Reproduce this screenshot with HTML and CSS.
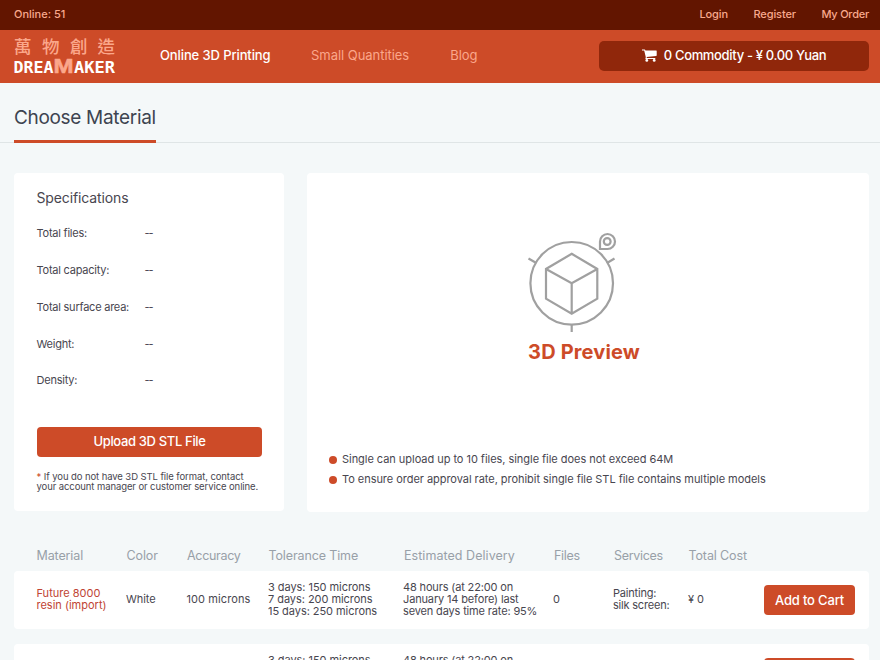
FILE: index.html
```html
<!DOCTYPE html>
<html lang="en">
<head>
<meta charset="utf-8">
<title>Dreamaker - Choose Material</title>
<link rel="stylesheet" href="styles.css">
</head>
<body>
<div class="topbar">
  <span class="online">Online: 51</span>
  <nav class="account"><a>Login</a><a>Register</a><a class="order">My Order</a></nav>
</div>
<header class="header">
  <svg class="logo" width="104" height="40" viewBox="0 0 104 40">
    <text class="logo-cjk" y="16" x="0 28 56 83.5">萬物創造</text>
    <text class="logo-word" x="-0.5" y="36" textLength="40" lengthAdjust="spacingAndGlyphs">DREA</text>
    <text class="logo-m" x="39.5" y="36" textLength="20" lengthAdjust="spacingAndGlyphs">M</text>
    <text class="logo-word" x="60" y="36" textLength="41" lengthAdjust="spacingAndGlyphs">AKER</text>
  </svg>
  <nav class="nav"><a class="active">Online 3D Printing</a><a class="quantities">Small Quantities</a><a>Blog</a></nav>
  <a class="cart">
    <svg width="15" height="13" viewBox="0 0 15 13" fill="#fff"><path d="M0 0.4H2.6Q3.2 0.4 3.4 1.4H14.2Q14.8 1.4 14.7 2V6.3Q14.7 6.9 14.1 7L4.6 8.1L4.9 8.9H13.3V10.1H4Q3.4 10.1 3.4 9.5L3.8 8.3L2.2 1.6H0Z"/><circle cx="4.8" cy="11.4" r="1.4"/><circle cx="12.2" cy="11.4" r="1.4"/></svg>
    <span>0 Commodity - ¥ 0.00 Yuan</span>
  </a>
</header>
<div class="title-row"><h1>Choose Material</h1></div>
<main>
  <div class="panels">
    <section class="specs">
      <h2>Specifications</h2>
      <dl>
        <dt>Total files:</dt><dd>--</dd>
        <dt>Total capacity:</dt><dd>--</dd>
        <dt>Total surface area:</dt><dd>--</dd>
        <dt>Weight:</dt><dd>--</dd>
        <dt>Density:</dt><dd>--</dd>
      </dl>
      <a class="button upload">Upload 3D STL File</a>
      <p class="note"><i>*</i> If you do not have 3D STL file format, contact<br>your account manager or customer service online.</p>
    </section>
    <section class="preview">
      <svg class="cube" width="90" height="102" viewBox="0 0 90 102" fill="none" stroke="#a0a0a0" stroke-width="2.2">
        <circle cx="44.7" cy="52.3" r="41.3"/>
        <path d="M44.7 22.8L70.3 38V67.7L44.7 82.7L19 67.7V38ZM19 38L44.7 52.3L70.3 38M44.7 52.3V82.7M44.7 93.5V101M1.5 27.5L9.3 32M87.5 27.5L80 32"/>
        <path d="M73 18V10.5A7.5 7.5 0 1 1 80.5 18Z"/>
        <circle cx="80.2" cy="10.5" r="3.4"/>
      </svg>
      <strong>3D Preview</strong>
      <ul>
        <li>Single can upload up to 10 files, single file does not exceed 64M</li>
        <li>To ensure order approval rate, prohibit single file STL file contains multiple models</li>
      </ul>
    </section>
  </div>
  <div class="grid head">
    <span>Material</span><span>Color</span><span class="tight">Accuracy</span><span>Tolerance Time</span><span class="wide">Estimated Delivery</span><span class="tight">Files</span><span class="tight">Services</span><span>Total Cost</span>
  </div>
  <div class="grid row">
    <span class="material">Future 8000<br>resin (import)</span><span>White</span><span class="accuracy">100 microns</span>
    <span>3 days: 150 microns<br>7 days: 200 microns<br>15 days: 250 microns</span>
    <span class="delivery">48 hours (at 22:00 on<br>January 14 before) last<br>seven days time rate: 95%</span>
    <span>0</span><span class="services">Painting:<br>silk screen:</span><span>¥ 0</span><a class="button">Add to Cart</a>
  </div>
  <div class="grid row">
    <span></span><span></span><span></span>
    <span>3 days: 150 microns</span>
    <span class="delivery">48 hours (at 22:00 on</span>
    <span></span><span></span><span></span><a class="button"></a>
  </div>
</main>
</body>
</html>
```
FILE: styles.css
```css
* { box-sizing: border-box; }
html, body { height: 660px; overflow: hidden; }
body { display: flex; flex-direction: column; margin: 0; background: #f4f8f9; color: #48464f; font: 11px/12px Inter, "Open Sans", sans-serif; }
h1, h2, dl, dd, ul, p { margin: 0; padding: 0; font-weight: 400; }

.topbar { display: flex; flex: none; justify-content: space-between; align-items: center; height: 30px; padding: 0 11px 2px 14px; background: #621500; color: #f9a98d; font-weight: 500; }
.account { display: flex; gap: 25.5px; letter-spacing: -0.1px; }
.order { letter-spacing: -0.23px; }

.header { display: flex; flex: none; align-items: center; height: 53px; padding: 0 11px 2px 14px; background: #cd4b28; }
.logo { flex: none; margin-top: 3px; overflow: visible; }
.logo-cjk { fill: #fba78b; font: 500 17.5px "Noto Sans CJK TC", sans-serif; }
.logo-word { fill: #fff; font: bold 16px "DejaVu Sans Mono", monospace; }
.logo-m { fill: #fba78b; stroke: #fba78b; stroke-width: 0.6px; font: bold 21px "Liberation Sans", sans-serif; }
.nav { display: flex; gap: 41px; margin-left: 42px; color: #fba78b; font-size: 13px; letter-spacing: -0.04px; }
.nav .active { color: #fff; font-weight: 500; letter-spacing: -0.11px; }
.nav .quantities { margin-left: -0.5px; }
.nav, .cart { line-height: 16px; }
.nav { margin-top: -1px; }
.cart { display: flex; justify-content: center; align-items: center; gap: 7px; width: 270px; height: 30px; padding-bottom: 1px; margin-left: auto; border-radius: 5px; background: #90270b; color: #fff; font-size: 13px; font-weight: 500; letter-spacing: -0.33px; }

.title-row { flex: none; height: 60px; padding-left: 14px; border-bottom: 1px solid #dfe5e6; }
h1 { width: 142px; height: 60px; padding-top: 23px; border-bottom: 3px solid #cd4b28; color: #3d4450; font-size: 19px; line-height: 24px; letter-spacing: -0.32px; white-space: nowrap; }

main { flex: 1; min-height: 0; padding: 30px 11px 0 14px; overflow: hidden; }
.panels { display: flex; align-items: flex-start; gap: 23px; }
.specs, .preview { border-radius: 4px; background: #fff; }
.specs { width: 270px; height: 338px; padding: 16px 22px 0 23px; }
h2 { margin-left: -0.5px; font-size: 14px; line-height: 18px; letter-spacing: -0.12px; }
dl { display: grid; grid-template-columns: 108px 1fr; grid-auto-rows: 36.8px; margin-top: 20.2px; margin-left: -0.5px; letter-spacing: -0.23px; }
dd { letter-spacing: -1.1px; }
.button { display: flex; justify-content: center; align-items: center; height: 30px; border-radius: 4px; background: #cd4b28; color: #fff; font-size: 13px; font-weight: 500; letter-spacing: -0.17px; white-space: nowrap; }
.upload { margin-top: 15.8px; padding-bottom: 1px; letter-spacing: -0.35px; }
.note { margin-top: 15px; margin-left: -0.5px; font-size: 9.5px; line-height: 10px; letter-spacing: -0.09px; white-space: nowrap; }
.note i { color: #cd4b28; font-style: normal; }

.preview { display: flex; flex-direction: column; align-items: center; width: 562px; height: 339px; padding-top: 58px; }
.cube { display: block; margin-right: 32px; }
.preview strong { margin-right: 8px; margin-top: 7px; color: #cd4b28; font-size: 20px; line-height: 24px; letter-spacing: 0.15px; }
.preview ul { align-self: stretch; margin-top: 85px; padding-left: 22px; list-style: none; line-height: 20px; letter-spacing: -0.04px; }
.preview li { display: flex; align-items: center; gap: 5px; }
.preview li::before { content: ""; width: 8px; height: 8px; margin-top: 1px; border-radius: 50%; background: #cd4b28; }

.grid { display: grid; grid-template-columns: 90px 60px 82px 135px 150px 60px 75px 76px 91px; align-items: center; padding-left: 22px; white-space: nowrap; }
.head { height: 29px; margin-top: 31px; margin-bottom: -1px; padding-left: 22.5px; padding-bottom: 4px; color: #98a0a8; font-size: 12.5px; letter-spacing: -0.12px; }
.head .wide { padding-left: 0.5px; letter-spacing: 0.05px; }
.head .tight { padding-left: 0.5px; letter-spacing: -0.3px; }
.row { height: 58px; margin-bottom: 15px; border-radius: 4px; background: #fff; letter-spacing: -0.05px; }
.row span { padding-bottom: 2px; }
.row:last-child { align-items: start; padding-top: 10px; }
.row:last-child .button { margin-top: 4px; }
.row .material { padding-left: 0.5px; color: #c04434; letter-spacing: 0; }
.row .accuracy { padding-left: 0.5px; letter-spacing: 0.1px; }
.delivery { letter-spacing: -0.15px; }
.services { letter-spacing: -0.2px; }
```
